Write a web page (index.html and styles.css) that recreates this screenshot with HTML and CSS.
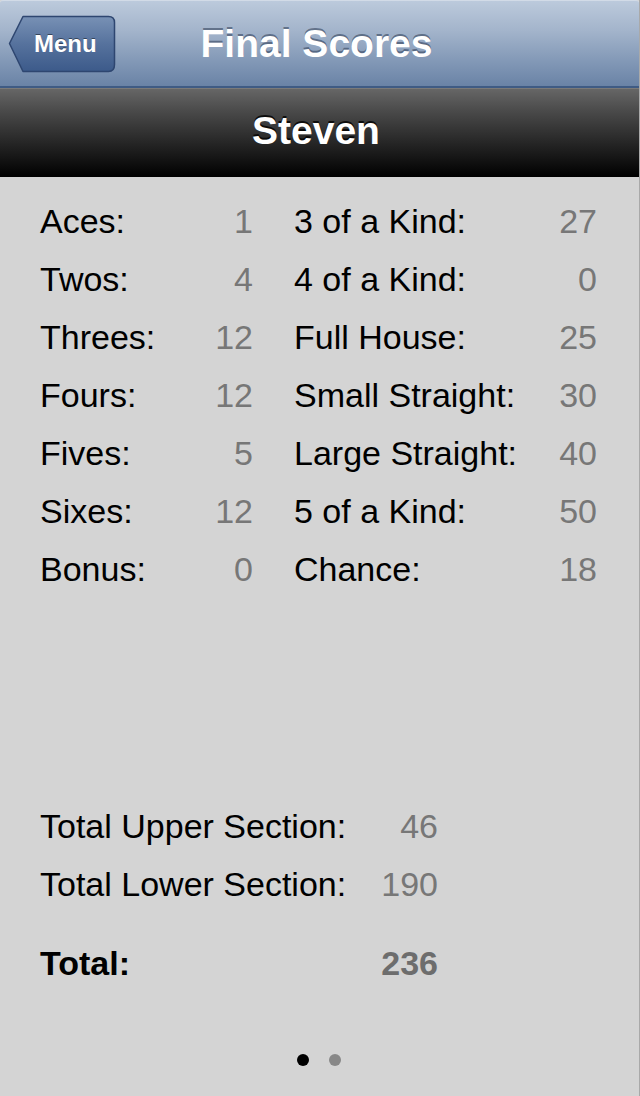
FILE: index.html
```html
<!DOCTYPE html>
<html>
<head>
<meta charset="utf-8">
<link rel="stylesheet" href="styles.css">
</head>
<body>
<div class="screen">
  <header class="navbar">
    <div class="nav-left">
      <button class="back-btn">
        <svg class="back-shape" width="108" height="58" viewBox="0 0 108 58">
          <defs>
            <linearGradient id="bg" x1="0" y1="0" x2="0" y2="1">
              <stop offset="0" stop-color="#7891b5"/>
              <stop offset="0.5" stop-color="#56729d"/>
              <stop offset="1" stop-color="#3c5a8a"/>
            </linearGradient>
          </defs>
          <path d="M1.5 28.5 L15 1.5 H100.5 Q106.5 1.5 106.5 7.5 V49.5 Q106.5 56.5 100.5 56.5 H15 Z" fill="url(#bg)" stroke="#2e4670" stroke-width="1.5" stroke-linejoin="round"/>
        </svg>
        <span class="back-label">Menu</span>
      </button>
    </div>
    <h1 class="nav-title">Final Scores</h1>
    <div class="nav-right"></div>
  </header>
  <div class="player-bar">Steven</div>
  <main class="content">
    <section class="scores">
      <div class="col">
        <div class="row"><span class="lbl">Aces:</span><span class="val">1</span></div>
        <div class="row"><span class="lbl">Twos:</span><span class="val">4</span></div>
        <div class="row"><span class="lbl">Threes:</span><span class="val">12</span></div>
        <div class="row"><span class="lbl">Fours:</span><span class="val">12</span></div>
        <div class="row"><span class="lbl">Fives:</span><span class="val">5</span></div>
        <div class="row"><span class="lbl">Sixes:</span><span class="val">12</span></div>
        <div class="row"><span class="lbl">Bonus:</span><span class="val">0</span></div>
      </div>
      <div class="col">
        <div class="row"><span class="lbl">3 of a Kind:</span><span class="val">27</span></div>
        <div class="row"><span class="lbl">4 of a Kind:</span><span class="val">0</span></div>
        <div class="row"><span class="lbl">Full House:</span><span class="val">25</span></div>
        <div class="row"><span class="lbl">Small Straight:</span><span class="val">30</span></div>
        <div class="row"><span class="lbl">Large Straight:</span><span class="val">40</span></div>
        <div class="row"><span class="lbl">5 of a Kind:</span><span class="val">50</span></div>
        <div class="row"><span class="lbl">Chance:</span><span class="val">18</span></div>
      </div>
    </section>
    <section class="totals">
      <div class="row"><span class="lbl">Total Upper Section:</span><span class="val">46</span></div>
      <div class="row"><span class="lbl">Total Lower Section:</span><span class="val">190</span></div>
      <div class="row grand"><span class="lbl">Total:</span><span class="val">236</span></div>
    </section>
    <div class="pager">
      <span class="dot active"></span>
      <span class="dot"></span>
    </div>
  </main>
</div>
</body>
</html>
```
FILE: styles.css
```css
* { box-sizing: border-box; }
html, body {
  margin: 0;
  padding: 0;
}
body {
  width: 640px;
  height: 1096px;
  overflow: hidden;
  font-family: "Liberation Sans", Arial, Helvetica, sans-serif;
  background: #d4d4d4;
}
.screen {
  width: 640px;
  height: 1096px;
  display: flex;
  flex-direction: column;
  border-right: 1px solid #a9a9a9;
  background: #d4d4d4;
}
.navbar {
  height: 88px;
  flex: none;
  display: grid;
  grid-template-columns: 1fr auto 1fr;
  align-items: center;
  background: linear-gradient(to bottom, #bccadc 0%, #a3b4cb 35%, #8399b7 70%, #6a83a6 100%);
  border-top: 1px solid #d2dbe7;
  border-bottom: 2px solid #3f5b84;
  border-radius: 3px 3px 0 0;
}
.nav-left {
  display: flex;
  align-items: center;
  padding-left: 8px;
}
.back-btn {
  position: relative;
  width: 108px;
  height: 58px;
  padding: 0;
  border: none;
  background: none;
  display: flex;
  align-items: center;
}
.back-shape {
  position: absolute;
  left: 0;
  top: 0;
}
.back-label {
  position: relative;
  margin-left: 26px;
  font-family: "Liberation Sans", Arial, sans-serif;
  font-weight: bold;
  font-size: 24px;
  color: #fff;
  text-shadow: 0 -1px 0 rgba(0,0,0,0.45);
}
.nav-title {
  margin: 0;
  margin-right: 6px;
  font-size: 39px;
  font-weight: bold;
  color: #fff;
  text-shadow: 0 -2px 0 rgba(40,55,80,0.55);
  line-height: 86px;
}
.player-bar {
  height: 89px;
  flex: none;
  display: flex;
  align-items: center;
  justify-content: center;
  background: linear-gradient(to bottom, #666 0%, #4a4a4a 25%, #222 65%, #000 100%);
  border-top: 1px solid #7a7a7a;
  color: #fff;
  font-size: 39px;
  font-weight: bold;
  text-shadow: 0 -2px 0 rgba(0,0,0,0.8);
  padding-right: 7px;
  padding-bottom: 4px;
}
.content {
  flex: 1;
  display: flex;
  flex-direction: column;
  padding: 15px 42px 0 40px;
}
.scores {
  display: grid;
  grid-template-columns: 213px 303px;
  column-gap: 41px;
}
.row {
  display: flex;
  justify-content: space-between;
  height: 58px;
  line-height: 58px;
  font-size: 34px;
  color: #000;
}
.val {
  color: #777;
}
.totals {
  margin-top: 199px;
  width: 398px;
}
.row.grand {
  margin-top: 21px;
  font-weight: bold;
}
.row.grand .val {
  color: #6d6d6d;
}
.pager {
  margin-top: 62px;
  display: flex;
  justify-content: center;
  gap: 20px;
}
.dot {
  width: 12px;
  height: 12px;
  border-radius: 50%;
  background: #888;
}
.dot.active {
  background: #000;
}
```
